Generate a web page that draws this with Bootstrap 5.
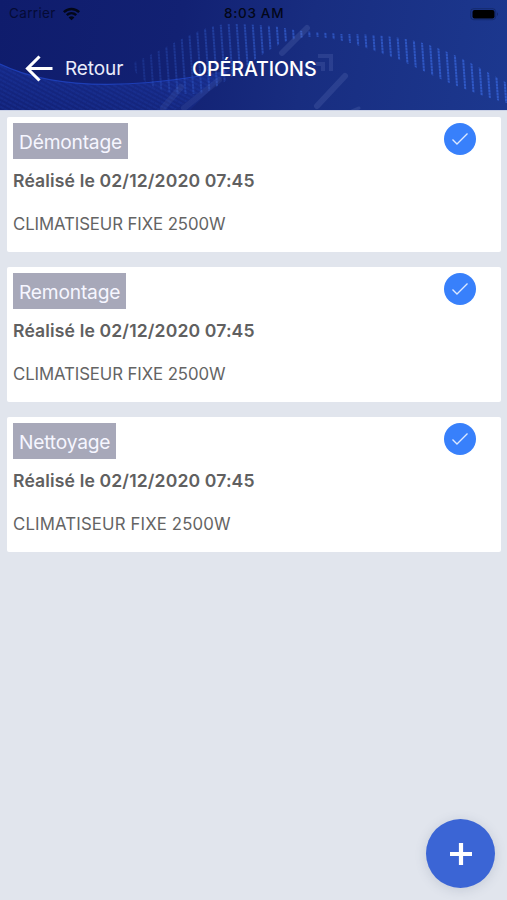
<!DOCTYPE html>
<html lang="fr">
<head>
<meta charset="utf-8">
<meta name="viewport" content="width=device-width, initial-scale=1">
<title>Opérations</title>
<link href="https://cdn.jsdelivr.net/npm/bootstrap@5.3.0/dist/css/bootstrap.min.css" rel="stylesheet">
<style>
body{background:#e1e5ed;font-family:Inter,"Liberation Sans",sans-serif;min-height:900px;overflow:hidden}
.app-header{height:111px;background:linear-gradient(100deg,#0f1c6c 0%,#122173 35%,#182d80 60%,#1c388f 100%);border-bottom:1px solid #cbd2e6}
.header-art{inset:0;width:507px;height:110px}
.status-bar{height:27px;font-size:13.5px;line-height:27px;color:#050a24}
.carrier{color:#050b35;letter-spacing:.35px;width:54px;margin-left:9px}
.clock{font-weight:500;letter-spacing:.7px;width:63px;margin-left:144px;color:#030718}
.nav-row{height:83px;color:#fff}
.back-label{font-size:19px;width:59px;margin-left:12px;padding-top:2px;letter-spacing:-.1px;color:#e9ecfa}
.page-title{font-size:19.7px;font-weight:500;margin-left:68px;padding-top:2px;letter-spacing:-.1px}
.op-list{padding:6px 6px 0 7px;gap:15px}
.op-card{height:135px;padding:6px;border-radius:2px;color:#646464}
.op-tag{height:36px;line-height:38px;padding:0 6px;background:#a7a8b9;color:#f6f6ff;font-size:19.2px;letter-spacing:-.2px}
.op-date{font-size:17.6px;font-weight:600;line-height:24px;margin-top:10px;letter-spacing:.13px;color:#606060}
.op-item{font-size:16.8px;line-height:24px;margin-top:19px;letter-spacing:-.1px}
.op-item-wide{letter-spacing:.14px}
.op-check{width:32px;height:32px;background:#3880fb;margin-right:19px}
.fab{width:69px;height:69px;right:12px;bottom:12px;background:#3b65d5;box-shadow:0 2px 12px rgba(80,95,125,.2)}
</style>
<script src="https://cdn.jsdelivr.net/npm/bootstrap@5.3.0/dist/js/bootstrap.bundle.min.js"></script>
</head>
<body>
<header class="app-header position-relative overflow-hidden">
  <svg class="header-art position-absolute" viewBox="0 0 507 110" aria-hidden="true">
    <defs>
      <pattern id="dots" width="8" height="3" patternUnits="userSpaceOnUse" patternTransform="skewX(4)"><path d="M3 0V2.7" stroke="#3562d6" stroke-width="2"/></pattern>
      <pattern id="mesh" width="5" height="4" patternUnits="userSpaceOnUse" patternTransform="rotate(28)"><path d="M0 2H4.4" stroke="#2446bd" stroke-width=".9"/></pattern>
      <linearGradient id="fade" x1="0" y1="0" x2="507" y2="0" gradientUnits="userSpaceOnUse"><stop offset=".25" stop-color="#333"/><stop offset=".45" stop-color="#707070"/><stop offset=".55" stop-color="#aaa"/><stop offset="1" stop-color="#ccc"/></linearGradient>
      <linearGradient id="down" x1="0" y1="62" x2="0" y2="110" gradientUnits="userSpaceOnUse"><stop stop-color="#2445c5" stop-opacity=".3"/><stop offset="1" stop-color="#2445c5" stop-opacity=".12"/></linearGradient>
      <mask id="fadeMask"><rect width="507" height="110" fill="url(#fade)"/></mask>
    </defs>
    <path d="M0 64C50 88 120 89 200 76L230 70L190 110H0Z" fill="url(#down)"/>
    <path d="M0 64C50 88 120 89 200 76L230 70L175 110H0Z" fill="url(#mesh)" opacity=".45"/>
    <path d="M0 64C50 88 120 89 200 76" fill="none" stroke="#2147c9" stroke-width="1.2" opacity=".75"/>
    <path mask="url(#fadeMask)" fill="url(#dots)" d="M130 64C170 48 200 24 230 24C245 24 265 25 280 27C300 32 320 32 340 34C365 34 380 35 400 38C440 44 475 65 507 83V103C460 90 430 74 400 60C370 50 350 40 320 37C305 36 300 38 290 40C255 52 220 94 195 94C170 95 145 90 130 64Z"/>
    <g stroke="#7589c9" stroke-opacity=".2" stroke-width="6" stroke-linecap="round" fill="none">
      <path d="M282 53L307 28M317 106L345 76"/>
      <path d="M163 108L181 87M184 108L219 80" stroke-opacity=".13"/>
      <path d="M318 56H331V71M316 64H323V71" stroke-width="4" stroke-linecap="butt"/>
      <path d="M352 111L359 108" stroke-width="3"/>
    </g>
  </svg>
  <div class="status-bar position-relative d-flex align-items-center">
    <span class="carrier text-nowrap">Carrier</span>
    <svg class="flex-shrink-0" width="17" height="14" viewBox="0 0 17 14" aria-label="Wi-Fi"><g fill="none" stroke="#030718" stroke-width="2.5"><path d="M.8 5.1C5.2.8 11.8.8 16.2 5.1M3.8 8.2C6.5 5.6 10.5 5.6 13.2 8.2"/></g><path d="M5.6 10.5C7.2 8.9 9.8 8.9 11.4 10.5L8.5 13.3Z" fill="#030718"/></svg>
    <span class="clock text-nowrap">8:03 AM</span>
    <svg class="ms-auto me-2" width="29" height="14" viewBox="0 0 29 14" aria-label="Batterie"><rect x=".7" y="1.7" width="25" height="11" rx="3" fill="none" stroke="#0b1842" opacity=".4"/><rect x="2.5" y="3" width="22" height="8.5" rx="2" fill="#000"/><path d="M27 5.2Q29 7 27 9Z" fill="#0b1842" opacity=".5"/></svg>
  </div>
  <div class="nav-row position-relative d-flex align-items-center">
    <svg class="flex-shrink-0 ms-4" width="29" height="28" viewBox="-1 0 29 28" aria-hidden="true"><path d="M14.5 1.5L2.5 13.5L14.5 25.5M2.5 13.5H27.5" fill="none" stroke="#fff" stroke-width="3.1"/></svg>
    <span class="back-label text-nowrap">Retour</span>
    <span class="page-title text-nowrap">OPÉRATIONS</span>
  </div>
</header>
<main class="op-list d-flex flex-column">
  <article class="op-card bg-white d-flex justify-content-between align-items-start">
    <div><span class="op-tag d-inline-block align-top">Démontage</span><div class="op-date">Réalisé le 02/12/2020 07:45</div><div class="op-item">CLIMATISEUR FIXE 2500W</div></div>
    <span class="op-check rounded-circle d-flex align-items-center justify-content-center"><svg width="18" height="14" viewBox="0 0 18 14"><path d="M1.5 7.5L6 12L16.5 1.5" fill="none" stroke="#dce9ff" stroke-width="1.4"/></svg></span>
  </article>
  <article class="op-card bg-white d-flex justify-content-between align-items-start">
    <div><span class="op-tag d-inline-block align-top">Remontage</span><div class="op-date">Réalisé le 02/12/2020 07:45</div><div class="op-item">CLIMATISEUR FIXE 2500W</div></div>
    <span class="op-check rounded-circle d-flex align-items-center justify-content-center"><svg width="18" height="14" viewBox="0 0 18 14"><path d="M1.5 7.5L6 12L16.5 1.5" fill="none" stroke="#dce9ff" stroke-width="1.4"/></svg></span>
  </article>
  <article class="op-card bg-white d-flex justify-content-between align-items-start">
    <div><span class="op-tag d-inline-block align-top">Nettoyage</span><div class="op-date">Réalisé le 02/12/2020 07:45</div><div class="op-item op-item-wide">CLIMATISEUR FIXE 2500W</div></div>
    <span class="op-check rounded-circle d-flex align-items-center justify-content-center"><svg width="18" height="14" viewBox="0 0 18 14"><path d="M1.5 7.5L6 12L16.5 1.5" fill="none" stroke="#dce9ff" stroke-width="1.4"/></svg></span>
  </article>
</main>
<button class="fab btn rounded-circle border-0 p-0 position-fixed d-flex align-items-center justify-content-center" aria-label="Ajouter"><svg width="24" height="24" viewBox="0 0 24 24"><path d="M12 1V23M1 12H23" stroke="#fff" stroke-width="4.2"/></svg></button>
</body>
</html>
